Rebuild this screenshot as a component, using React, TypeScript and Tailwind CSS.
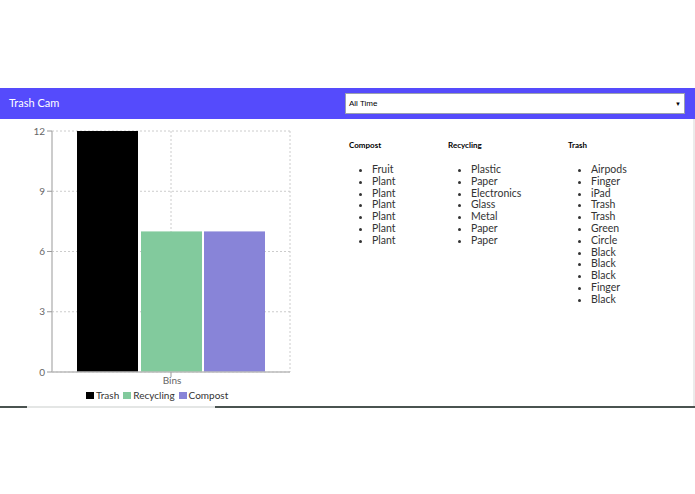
import React from 'react';

const compost = ['Fruit', 'Plant', 'Plant', 'Plant', 'Plant', 'Plant', 'Plant'];
const recycling = ['Plastic', 'Paper', 'Electronics', 'Glass', 'Metal', 'Paper', 'Paper'];
const trash = ['Airpods', 'Finger', 'iPad', 'Trash', 'Trash', 'Green', 'Circle', 'Black', 'Black', 'Black', 'Finger', 'Black'];

const font = { fontFamily: 'Lato, "Open Sans", sans-serif' };

function BinChart() {
  const top = 12;
  const bottom = 253;
  const left = 52;
  const right = 290;
  const y = (v: number) => bottom - ((bottom - top) * v) / 12;
  const ticks = [0, 3, 6, 9, 12];
  const bars = [
    { x: 77, v: 12, fill: '#000000' },
    { x: 141, v: 7, fill: '#82ca9d' },
    { x: 204, v: 7, fill: '#8884d8' },
  ];

  return (
    <svg width="300" height="270" className="block" style={font}>
      {/* grid */}
      {ticks.map((t) => (
        <line key={t} x1={left} x2={right} y1={y(t)} y2={y(t)} stroke="#ccc" strokeDasharray="2 2" strokeWidth="1" />
      ))}
      <line x1={171} x2={171} y1={top} y2={bottom} stroke="#ccc" strokeDasharray="2 2" />
      <line x1={right} x2={right} y1={top} y2={bottom} stroke="#ccc" strokeDasharray="2 2" />

      {/* bars */}
      {bars.map((b) => (
        <rect key={b.x} x={b.x} y={y(b.v)} width={61} height={bottom - y(b.v)} fill={b.fill} />
      ))}

      {/* axes */}
      <line x1={left} x2={left} y1={top} y2={bottom} stroke="#bbb" strokeWidth="1.5" />
      <line x1={left} x2={right} y1={bottom} y2={bottom} stroke="#bbb" strokeWidth="1.5" />
      {ticks.map((t) => (
        <g key={t}>
          <line x1={left - 5} x2={left} y1={y(t)} y2={y(t)} stroke="#999" />
          <text x={left - 7} y={y(t) + 3.5} textAnchor="end" fontSize="10" fill="#666">
            {t}
          </text>
        </g>
      ))}
      <line x1={171} x2={171} y1={bottom} y2={bottom + 5} stroke="#999" />
      <text x={172} y={265} textAnchor="middle" fontSize="10" fill="#666">
        Bins
      </text>
    </svg>
  );
}

function BinList({ title, items, className }: { title: string; items: string[]; className: string }) {
  return (
    <div className={className}>
      <div className="text-[8px] font-bold leading-[10px] text-black">{title}</div>
      <ul className="mt-[14px] list-disc pl-[23px] text-[10.5px] leading-[11.8px] text-[#333]">
        {items.map((item, i) => (
          <li key={i}>{item}</li>
        ))}
      </ul>
    </div>
  );
}

export default function App() {
  return (
    <div className="w-[695px] h-[494px] bg-white" style={font}>
      <div className="h-[88px]" />

      {/* Header */}
      <div className="flex h-[31px] items-center bg-[#554bfc]">
        <div className="w-[345px] pl-[9px] text-[11px] text-white">Trash Cam</div>
        <div className="flex h-[21px] w-[340px] items-center justify-between border border-[#9aa0b0] bg-white px-[3px]">
          <span className="text-[8px] text-black" style={{ fontFamily: '"Liberation Sans", Arial, sans-serif' }}>All Time</span>
          <span className="text-[6px] text-black">▼</span>
        </div>
      </div>

      {/* Content */}
      <div className="flex h-[287px] border-r-2 border-[#ebebeb]">
        <div className="w-[345px]">
          <BinChart />
          <div className="flex items-center pl-[86px] text-[10px] leading-[12px] text-[#333]">
            <span className="mr-[2px] inline-block h-[7px] w-[8px] bg-black" />
            <span className="mr-[4px]">Trash</span>
            <span className="mr-[2px] inline-block h-[7px] w-[8px] bg-[#82ca9d]" />
            <span className="mr-[4px]">Recycling</span>
            <span className="mr-[2px] inline-block h-[7px] w-[8px] bg-[#8884d8]" />
            <span>Compost</span>
          </div>
        </div>
        <div className="flex pt-[21px]">
          <BinList title="Compost" items={compost} className="w-[103px] pl-[4px]" />
          <BinList title="Recycling" items={recycling} className="w-[120px]" />
          <BinList title="Trash" items={trash} className="w-[100px]" />
        </div>
      </div>

      {/* bottom rule */}
      <div className="flex h-[2px]">
        <div className="w-[27px] bg-[#4a5350]" />
        <div className="w-[188px] bg-[#e4e6e5]" />
        <div className="flex-1 bg-[#4a5350]" />
      </div>
    </div>
  );
}
